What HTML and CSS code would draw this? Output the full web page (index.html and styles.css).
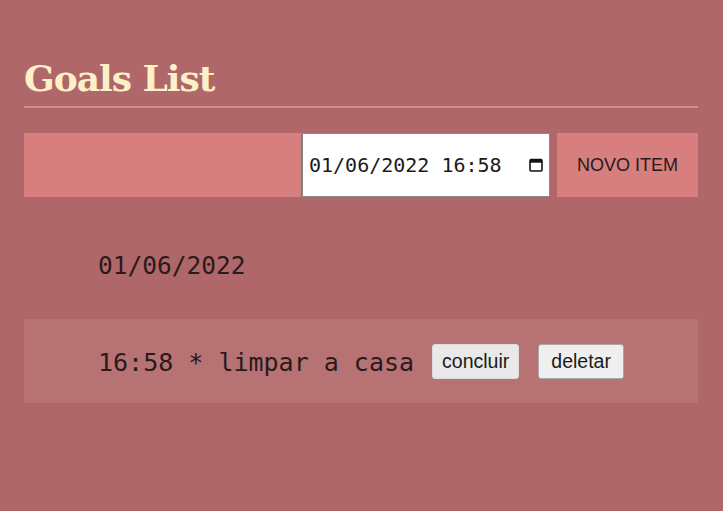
FILE: index.html
```html
<!DOCTYPE html>
<html lang="pt">
<head>
<meta charset="utf-8">
<title>Goals List</title>
<link rel="stylesheet" href="styles.css">
</head>
<body>
<main class="app">
  <h1 class="title">Goals List</h1>
  <form class="form">
    <input class="text-input" type="text" aria-label="Meta">
    <div class="date-input">
      <span class="date-value">01/06/2022 16:58</span>
      <svg class="cal" width="16" height="16" viewBox="0 0 16 16" aria-hidden="true">
        <rect x="2" y="2.5" width="12" height="11.5" rx="1.2" fill="none" stroke="#111" stroke-width="1.6"/>
        <rect x="2" y="2.5" width="12" height="3.2" fill="#111"/>
      </svg>
    </div>
    <button class="add-btn" type="button">NOVO ITEM</button>
  </form>
  <h2 class="day">01/06/2022</h2>
  <ul class="list">
    <li class="item">
      <span class="item-text">16:58 * limpar a casa</span>
      <button class="small-btn small-btn--soft" type="button">concluir</button>
      <button class="small-btn" type="button">deletar</button>
    </li>
  </ul>
</main>
</body>
</html>
```
FILE: styles.css
```css
html, body {
  margin: 0;
  height: 100%;
}
body {
  background: #b0676a;
  font-family: "Liberation Sans", Arial, sans-serif;
}
.app {
  padding: 0 25px 0 24px;
}
.title {
  margin: 0;
  padding-top: 58px;
  padding-bottom: 8px;
  font-family: "DejaVu Serif", serif;
  font-weight: bold;
  font-size: 36px;
  letter-spacing: -1px;
  line-height: 40px;
  color: #fdf0c9;
  border-bottom: 2px solid #cf918f;
}
.form {
  display: flex;
  margin-top: 25px;
  height: 64px;
}
.text-input {
  width: 277px;
  box-sizing: border-box;
  border: none;
  margin: 0;
  background: #d67f7e;
  outline: none;
}
.date-input {
  width: 248px;
  margin-left: 1px;
  box-sizing: border-box;
  background: #fff;
  border: 1px solid #8a8a8a;
  display: flex;
  align-items: center;
  padding: 0 4px 0 6px;
  font-family: "DejaVu Sans Mono", monospace;
  font-size: 20px;
  color: #1b1b1b;
}
.date-value {
  flex: 1;
}
.cal {
  margin-right: 1px;
}
.add-btn {
  margin-left: 7px;
  flex: 1;
  border: none;
  background: #d67f7e;
  font-family: "Liberation Sans", Arial, sans-serif;
  font-size: 18px;
  color: #2a1a1c;
  padding: 0;
}
.day {
  margin: 54px 0 0 74px;
  font-family: "DejaVu Sans Mono", monospace;
  font-weight: normal;
  font-size: 24.5px;
  line-height: 30px;
  color: #2a1a1c;
}
.list {
  list-style: none;
  margin: 38px 0 0;
  padding: 0;
}
.item {
  background: #b77273;
  height: 84px;
  display: flex;
  align-items: center;
  padding-left: 74px;
}
.item-text {
  font-family: "DejaVu Sans Mono", monospace;
  font-size: 25px;
  color: #2a1a1c;
  margin-right: 18px;
  position: relative;
  top: 1px;
}
.small-btn {
  font-family: "Liberation Sans", Arial, sans-serif;
  font-size: 19.5px;
  color: #1a1a1a;
  background: #efefef;
  border: 1px solid #a8a8a8;
  border-radius: 3px;
  height: 35px;
  padding: 0 12px;
  margin-right: 19px;
}
.small-btn--soft {
  padding: 0 9px;
  background: #e9e9e9;
  border-color: #dcdcdc;
}
```
